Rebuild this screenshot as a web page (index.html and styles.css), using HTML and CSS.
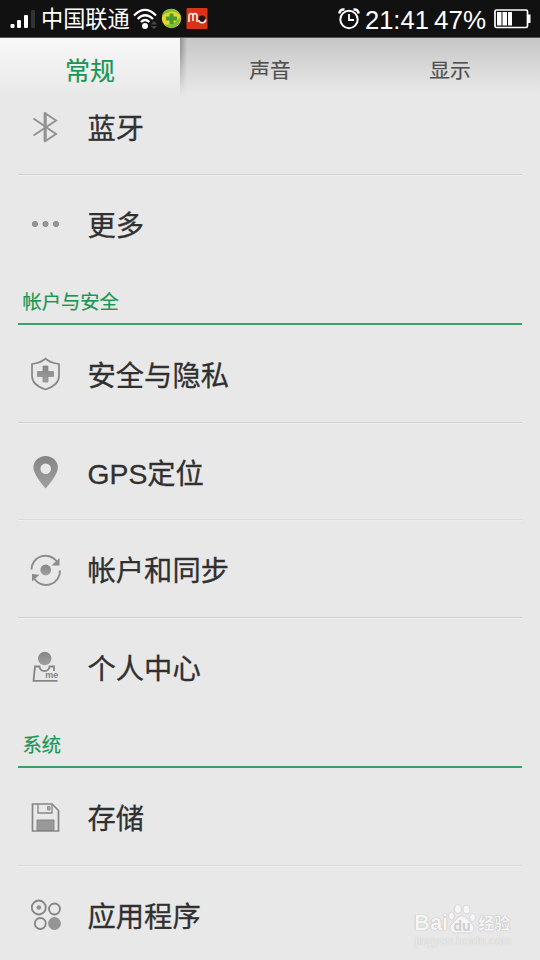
FILE: index.html
```
<!DOCTYPE html>
<html lang="zh-CN">
<head>
<meta charset="utf-8">
<title>设置</title>
<link rel="stylesheet" href="styles.css">
</head>
<body>
<svg width="0" height="0" class="defs"><defs>
<linearGradient id="metal" x1="0" y1="0" x2="0" y2="1"><stop offset="0" stop-color="#858585"/><stop offset="1" stop-color="#a0a0a0"/></linearGradient>
</defs></svg>
<main class="screen">
<header class="status">
<svg class="signal" width="26" height="20" viewBox="0 0 26 20"><g fill="#fff"><rect x=".5" y="15" width="4" height="4" rx="1"/><rect x="7" y="11" width="4" height="8" rx="1"/><rect x="14" y="6" width="4" height="13" rx="1"/></g><rect x="21" y="1" width="4" height="18" rx="1" fill="#333"/></svg>
<span class="carrier">中国联通</span>
<svg class="wifi" width="26" height="22" viewBox="0 0 26 22"><g fill="none" stroke="#fff" stroke-width="2.200"><path d="M1 7.500Q12-3.500 23 7.500M4.700 11Q12 3.500 20 11M8 14Q12 10 16.500 14"/></g><circle cx="12" cy="18" r="3" fill="#fff"/><path d="M17.500 16.500l3.500-3.500 3.500 3.500zM17.500 18l3.500 3 3.500-3z" fill="#444"/></svg>
<svg class="guard" width="21" height="21" viewBox="0 0 21 21"><circle cx="10.500" cy="10.500" r="9.700" fill="#e7d52c"/><path d="M1 8Q2 1 10 1q7 0 9 6Q14 2 9 4 3 6 1 8zM3 16q9 3 17-8-1 11-9 12-5 0-8-4z" fill="#80bd35"/><path d="M8.500 5.500h4v3H16v4h-3.500v3.500h-4v-3.500H5v-4h3.500z" fill="#4a9a2e"/></svg>
<svg class="mo" width="22" height="21" viewBox="0 0 22 21"><rect x=".5" width="21" height="21" rx="1" fill="#d73517"/><path d="M3 14V8q0-2.300 2-2.300T7 8v5V8q0-2.300 2-2.300T11 8v6" fill="none" stroke="#ffe8e1" stroke-width="1.700"/><circle cx="16" cy="11" r="3.400" fill="#241313"/><path d="M12.500 12q1.500 3.500 5 2.500 2.500-1 2-3" fill="none" stroke="#fff" stroke-width="1.600"/></svg>
<svg class="alarm" width="22" height="22" viewBox="0 0 22 22"><g fill="none" stroke="#fff"><circle cx="11" cy="11.500" r="8.700" stroke-width="2"/><path d="M11 6v6h5" stroke-width="1.800"/><path d="M1.300 5.500Q2 1 6.500 1.500M15.500 1.500Q20 1 20.700 5.500" stroke-width="2.500"/></g></svg>
<span class="time">21:41</span>
<span class="percent">47%</span>
<svg class="battery" width="37" height="20" viewBox="0 0 37 20"><rect x="1" y="1" width="32.500" height="17.500" rx="1.500" fill="none" stroke="#fff" stroke-width="1.700"/><path d="M3 3h4.500v13.500H3zM8.500 3H13v13.500H8.500zM14 3h4v13.500h-4zM34 5.500h2.500v8.500H34z" fill="#fff"/></svg>
</header>
<nav class="tabs">
<div class="tab active">常规</div><div class="tab">声音</div><div class="tab">显示</div>
</nav>
<section class="list">
<div class="row first"><svg class="icon" viewBox="0 0 34 34"><path d="M5.500 8.500L28 24 17.500 31V3.500L28 10.500 5.500 25.500" fill="none" stroke="#929292" stroke-width="2"/><path d="M17 2.500v29" stroke="#929292" stroke-width="2.800"/></svg><span class="label">蓝牙</span></div>
<div class="row last"><svg class="icon" viewBox="0 0 34 34"><g fill="#999" stroke="#808080" stroke-width=".9"><circle cx="7" cy="17" r="2.600"/><circle cx="17.500" cy="17" r="2.600"/><circle cx="28" cy="17" r="2.600"/></g></svg><span class="label">更多</span></div>
<h2 class="heading">帐户与安全</h2>
<div class="row"><svg class="icon" viewBox="0 0 34 34"><path d="M17.500 1.700Q22 6 31 7v12q0 9-13.500 13.500Q4 28 4 19V7Q13 6 17.500 1.700z" fill="none" stroke="#868686" stroke-width="1.700"/><path d="M15 9h5v5.500h5.500v5H20V25h-5v-5.500H9.500v-5H15z" fill="url(#metal)" stroke="#858585" stroke-width=".7"/></svg><span class="label">安全与隐私</span></div>
<div class="row faint"><svg class="icon" viewBox="0 0 34 34"><path fill-rule="evenodd" d="M17.700 1C10.900 1 5.400 6 5.400 12.500 5.400 20 17.700 33.500 17.700 33.500S29.900 20 29.900 12.500C29.900 6 24.400 1 17.700 1zm0 7.500a5.300 5.300 0 1 1 0 10.600 5.300 5.300 0 0 1 0-10.600z" fill="url(#metal)"/></svg><span class="label">GPS定位</span></div>
<div class="row"><svg class="icon" viewBox="0 0 34 34"><g fill="none" stroke="#8d8d8d" stroke-width="2"><path d="M3.500 16.500A14 14 0 0 1 28.500 8M32 17.500A14 14 0 0 1 6.500 26"/></g><path d="M31.500 5v7.500h-8zM4 28.500V21l7.500.7z" fill="#8b8b8b"/><circle cx="17.700" cy="17" r="5.400" fill="url(#metal)"/></svg><span class="label">帐户和同步</span></div>
<div class="row last"><svg class="icon" viewBox="0 0 34 34"><circle cx="16.700" cy="8.500" r="6.700" fill="url(#metal)"/><path d="M29.500 30.800H5.500L7 16.500h4.500q.5 4.500 5 4.500t5-4.500H26V21" fill="none" stroke="#868686" stroke-width="1.800"/><text x="17.300" y="27.500" class="me">me</text></svg><span class="label">个人中心</span></div>
<h2 class="heading">系统</h2>
<div class="row faint"><svg class="icon" viewBox="0 0 34 34"><path d="M4.500 4H24l6.500 6.500V31h-26z" fill="none" stroke="#858585" stroke-width="1.700"/><path d="M9 20h17v10.500H9z" fill="#999" stroke="#858585"/><path d="M10 4v9h14V4" fill="none" stroke="#858585" stroke-width="1.300"/><path d="M19.500 6.500H22V10h-2.500z" fill="#aaa" stroke="#858585" stroke-width=".8"/></svg><span class="label">存储</span></div>
<div class="row last"><svg class="icon" viewBox="0 0 34 34"><g fill="none" stroke="#858585" stroke-width="1.800"><circle cx="10.800" cy="9.500" r="7"/><circle cx="26.500" cy="11" r="5.500"/><circle cx="12.300" cy="25.500" r="5.500"/></g><circle cx="10.800" cy="9.500" r="2.300" fill="#909090"/><circle cx="26.500" cy="25.500" r="6.400" fill="#959595"/></svg><span class="label">应用程序</span></div>
</section>
<div class="watermark">
<div class="brand"><span class="bai">Bai</span><svg width="28" height="30" viewBox="0 0 28 30"><g fill="#f5f5f5" stroke="#d0d0d0" stroke-width=".8"><ellipse cx="3.500" cy="12" rx="3" ry="4"/><ellipse cx="10" cy="5" rx="3.400" ry="4.400"/><ellipse cx="18.500" cy="5.500" rx="3.400" ry="4.400"/><ellipse cx="24.500" cy="13.500" rx="3" ry="4"/><path d="M14 12c-5 0-6 5-10 8-4.500 4-1 9.500 4 9 4-.5 8-.5 12 0 5 .5 8.500-5 4-9C20 17 19 12 14 12z"/></g><text x="5.500" y="26.500" class="du">du</text></svg><span class="exp">经验</span></div>
<div class="url">jingyan.baidu.com</div>
</div>
</main>
</body>
</html>
```
FILE: styles.css
```
* { box-sizing: border-box; }
html, body { margin: 0; height: 100%; overflow: hidden; }
body { font-family: "Liberation Sans", "Noto Sans CJK SC", sans-serif; background: #e8e8e8; color: #303030; }
.defs { position: absolute; }
.screen { position: relative; width: 540px; height: 960px; overflow: hidden; }
.status { display: flex; align-items: center; height: 38px; padding-left: 10px; background: #111; border-bottom: 1px solid #555; color: #fff; white-space: nowrap; }
.status svg { flex: none; }
.signal { margin-top: 1px; }
.carrier { width: 89px; margin: 2px 0 0 5px; font-size: 22.200px; line-height: 36px; }
.wifi { margin-left: 3px; }
.guard { margin-left: 2px; }
.mo { margin-left: 4px; }
.alarm { margin-left: 130px; }
.time { width: 64px; margin: 3px 0 0 5px; font-size: 25.500px; }
.percent { width: 54px; margin: 3px 0 0 5px; font-size: 26px; }
.battery { margin-left: 6px; }
.tabs { display: grid; grid-template-columns: repeat(3, 180px); height: 58px; background: linear-gradient(#c6c6c6, #e8e8e8 95%); }
.tab { display: flex; align-items: center; justify-content: center; height: 62px; font-size: 20.700px; color: #505050; -webkit-text-stroke: .2px; }
.active { position: relative; height: 58px; padding-top: 4px; font-size: 25px; color: #199653; background: linear-gradient(#f8f8f8, #e8e8e8); }
.active::after { content: ""; position: absolute; left: 180px; top: 0; width: 7px; height: 58px; background: linear-gradient(90deg, #0004, #0000); -webkit-mask-image: linear-gradient(#000 20%, transparent); mask-image: linear-gradient(#000 20%, transparent); }
.list { padding: 0 18px; }
.row { display: flex; align-items: center; height: 97.600px; padding: 2px 0 0 10px; border-bottom: 1px solid #d0d0d0; box-shadow: 0 1px #efefef; }
.first { height: 79px; padding-top: 0; padding-bottom: 16px; }
.faint { border-bottom-color: #dadada; }
.last { border-bottom-color: transparent; box-shadow: none; }
.icon { width: 34px; height: 34px; flex: none; }
.label { margin: 3px 0 0 25.500px; font-size: 28.300px; line-height: 40px; white-space: nowrap; -webkit-text-stroke: .3px; }
.heading { display: flex; align-items: center; height: 52.600px; margin: 0; padding: 7px 0 0 4.500px; border-bottom: 2px solid #3c9e68; font-size: 19.300px; font-weight: 400; color: #199653; -webkit-text-stroke: .2px; }
.me { font: bold 9px "Liberation Sans", sans-serif; fill: #858585; }
.watermark { position: absolute; left: 414px; top: 902px; width: 115px; color: #f5f5f5; text-shadow: 0 0 1px #aaa, 0 0 1px #bbb; }
.brand { display: flex; align-items: flex-end; height: 32px; }
.brand svg { flex: none; }
.bai { font-size: 22px; line-height: 22px; font-weight: 700; }
.exp { margin-left: 2px; font-size: 16px; line-height: 20px; font-weight: 700; }
.du { font: bold 14px "Liberation Sans", sans-serif; fill: #cecece; text-shadow: none; }
.url { margin-left: 1px; font-size: 12px; line-height: 14px; color: #ececec; text-shadow: 0 0 1px #bbb; }
```
